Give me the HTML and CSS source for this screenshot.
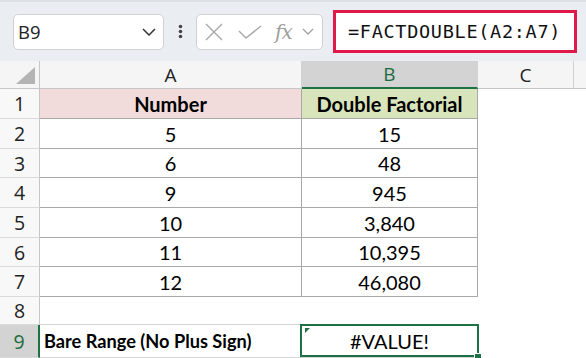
FILE: index.html
```html
<!DOCTYPE html>
<html lang="en">
<head>
<meta charset="UTF-8">
<title>FACTDOUBLE</title>
<link rel="stylesheet" href="styles.css">
</head>
<body>

<!-- Barra de fórmulas -->
<div class="topbar">
    <div class="namebox">
        <span>B9</span>
        <svg class="chev" width="14" height="8" viewBox="0 0 14 8"><path d="M1 1 L7 7 L13 1" fill="none" stroke="#333" stroke-width="1.5"/></svg>
    </div>
    <svg class="dots" width="5" height="15" viewBox="0 0 5 15"><circle cx="2.5" cy="2.5" r="1.8" fill="#444"/><circle cx="2.5" cy="7.5" r="1.8" fill="#444"/><circle cx="2.5" cy="12.5" r="1.8" fill="#444"/></svg>
    <div class="fxbox">
        <svg width="18" height="18" viewBox="0 0 18 18"><path d="M1 1 L17 17 M17 1 L1 17" stroke="#a8a8a8" stroke-width="1.4"/></svg>
        <svg width="24" height="14" viewBox="0 0 24 14"><path d="M1 6 L8 13 L23 1" fill="none" stroke="#a8a8a8" stroke-width="1.4"/></svg>
        <span class="fx">fx</span>
        <svg width="12" height="7" viewBox="0 0 12 7"><path d="M1 1 L6 6 L11 1" fill="none" stroke="#a0a0a0" stroke-width="1.3"/></svg>
    </div>
    <div class="formula">=FACTDOUBLE(A2:A7)</div>
</div>

<!-- Hoja -->
<div class="sheet">
    <div class="corner"><span class="tri"></span></div>
    <div class="colhead">A</div>
    <div class="colhead sel">B</div>
    <div class="colhead">C</div>
    <div class="colhead last"></div>

    <div class="rowhead">1</div>
    <div class="cell tb hd pink">Number</div>
    <div class="cell tb hd green">Double Factorial</div>
    <div class="cell"></div><div class="cell"></div>

    <div class="rowhead">2</div>
    <div class="cell tb">5</div><div class="cell tb">15</div>
    <div class="cell"></div><div class="cell"></div>

    <div class="rowhead">3</div>
    <div class="cell tb">6</div><div class="cell tb">48</div>
    <div class="cell"></div><div class="cell"></div>

    <div class="rowhead">4</div>
    <div class="cell tb">9</div><div class="cell tb">945</div>
    <div class="cell"></div><div class="cell"></div>

    <div class="rowhead">5</div>
    <div class="cell tb">10</div><div class="cell tb">3,840</div>
    <div class="cell"></div><div class="cell"></div>

    <div class="rowhead">6</div>
    <div class="cell tb">11</div><div class="cell tb">10,395</div>
    <div class="cell"></div><div class="cell"></div>

    <div class="rowhead">7</div>
    <div class="cell tb">12</div><div class="cell tb">46,080</div>
    <div class="cell"></div><div class="cell"></div>

    <div class="rowhead">8</div>
    <div class="cell lb"></div><div class="cell"></div>
    <div class="cell"></div><div class="cell"></div>

    <div class="rowhead sel">9</div>
    <div class="cell lt hd label">Bare Range (No Plus Sign)</div>
    <div class="cell lt active">#VALUE!<span class="err"></span><span class="handle"></span></div>
    <div class="cell"></div><div class="cell"></div>
</div>

</body>
</html>
```

FILE: styles.css
```css
body {
    margin: 0;
    width: 586px;
    height: 358px;
    overflow: hidden;
    background: #fff;
    font-family: "Lato", sans-serif;
}

/* barra superior */
.topbar {
    height: 61px;
    box-sizing: border-box;
    background: #eaedf1;
    border-top: 2px solid #dcdfe3;
    display: flex;
    align-items: center;
    padding-left: 13px;
}

.namebox {
    width: 151px;
    height: 36px;
    box-sizing: border-box;
    background: #fff;
    border: 1px solid #cfd2d6;
    border-radius: 5px;
    display: flex;
    align-items: center;
    justify-content: space-between;
    padding: 0 7px 0 4px;
    font-family: "Open Sans", sans-serif;
    font-size: 18.5px;
    color: #222;
}

.dots {
    margin-left: 14px;
}

.fxbox {
    margin-left: 13px;
    width: 127px;
    height: 36px;
    box-sizing: border-box;
    background: #fff;
    border: 1px solid #cfd2d6;
    border-radius: 5px;
    display: flex;
    align-items: center;
    padding-left: 8px;
}

.fxbox svg:nth-child(2) {
    margin-left: 15px;
}

.fx {
    margin-left: 13px;
    font-family: "DejaVu Serif", serif;
    font-style: italic;
    font-size: 20px;
    color: #a0a0a0;
    letter-spacing: -1px;
}

.fxbox svg:last-child {
    margin-left: 10px;
}

.formula {
    margin-left: 10px;
    width: 244px;
    height: 43px;
    box-sizing: border-box;
    background: #fff;
    border: 3px solid #e0194b;
    display: flex;
    align-items: center;
    padding-left: 12px;
    font-family: "DejaVu Sans Mono", monospace;
    font-size: 18.5px;
    letter-spacing: 0.7px;
    color: #111;
}

/* cuadrícula */
.sheet {
    display: grid;
    grid-template-columns: 40px 262px 176px 96px 1fr;
    grid-template-rows: 28px 30px 30px 29px 30px 30px 29px 30px 28px 33px;
}

.corner {
    background: #f5f5f5;
    border-right: 1px solid #c6c6c6;
    border-bottom: 1px solid #c6c6c6;
    position: relative;
}

.tri {
    position: absolute;
    left: 16px;
    top: 6px;
    width: 0;
    height: 0;
    border-left: 19px solid transparent;
    border-bottom: 17px solid #b4b4b4;
}

.colhead {
    background: #f5f5f5;
    border-right: 1px solid #d2d2d2;
    border-bottom: 1px solid #c6c6c6;
    display: flex;
    align-items: center;
    justify-content: center;
    font-family: "Open Sans", sans-serif;
    font-size: 19px;
    color: #222;
}

.colhead.sel {
    background: #d3d3d3;
    color: #1e6b41;
    border-bottom: 2px solid #1e7145;
}

.colhead.last {
    border-right: none;
}

.rowhead {
    background: #f8f8f8;
    border-right: 1px solid #c6c6c6;
    border-bottom: 1px solid #dadada;
    display: flex;
    align-items: center;
    justify-content: center;
    font-family: "Open Sans", sans-serif;
    font-size: 19.5px;
    color: #222;
}

.rowhead.sel {
    background: #d3d3d3;
    color: #1e6b41;
    border-right: 2px solid #1e7145;
}

.cell {
    display: flex;
    align-items: center;
    justify-content: center;
    font-size: 20px;
    color: #000;
    box-sizing: border-box;
}

.tb {
    border-right: 1px solid #a8a8a8;
    border-bottom: 1px solid #a8a8a8;
}

.lb {
    border-bottom: 1px solid #d4d4d4;
}

.lt {
    border-right: 1px solid #d4d4d4;
    border-bottom: 1px solid #d4d4d4;
}

.hd {
    font-weight: bold;
}

.pink {
    background: #f2dcdb;
}

.green {
    background: #d8e4bc;
}

.label {
    justify-content: flex-start;
    padding-left: 4px;
    font-size: 18.2px;
}

.active {
    position: relative;
}

.active::after {
    content: "";
    position: absolute;
    left: -2px;
    top: -1px;
    right: -2px;
    bottom: 0;
    border: 2px solid #1e7145;
}

.err {
    position: absolute;
    left: 3px;
    top: 3px;
    width: 0;
    height: 0;
    border-top: 5px solid #1e7145;
    border-right: 5px solid transparent;
}

.handle {
    position: absolute;
    right: -5px;
    bottom: -4px;
    width: 6px;
    height: 6px;
    background: #1e7145;
    border: 1px solid #fff;
    z-index: 2;
}
```
